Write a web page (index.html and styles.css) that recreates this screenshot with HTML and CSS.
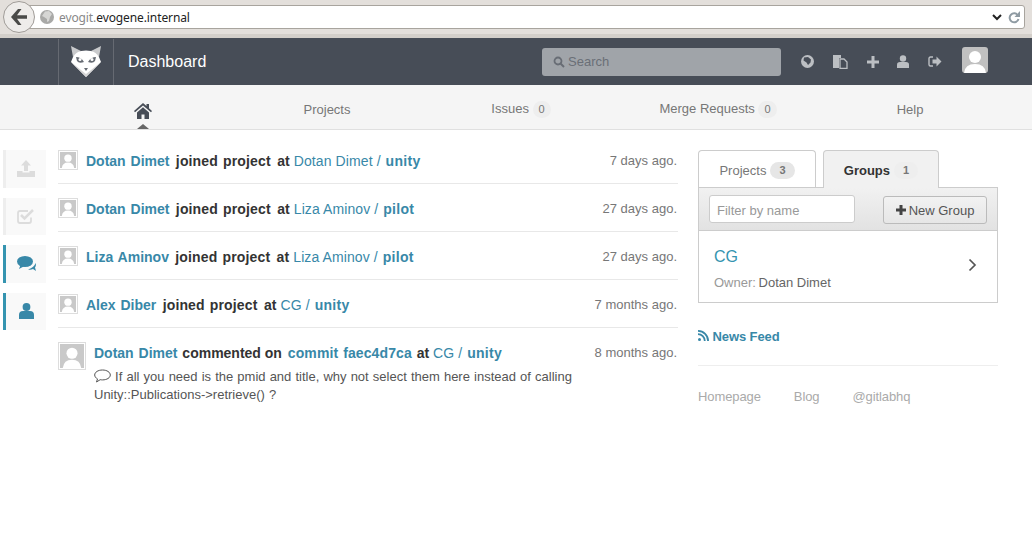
FILE: index.html
```html
<!DOCTYPE html>
<html lang="en">
<head>
    <meta charset="UTF-8">
    <meta name="viewport" content="width=device-width, initial-scale=1.0">
    <title>Dashboard</title>
    <link rel="stylesheet" href="styles.css">
</head>
<body>
    <div class="browser-bar">
        <div class="back-btn">
            <svg width="18" height="16" viewBox="0 0 18 16"><path d="M8 0 1 8l7 8h3.500L7 9.800h10V6.200H7L11.500 0z" fill="#4a4a48"/></svg>
        </div>
        <div class="url-box">
            <svg class="globe" width="14" height="14" viewBox="0 0 14 14"><circle cx="7" cy="7" r="7" fill="#a9a9a7"/><path d="M5 1.500 9 1l3 3-2 3-1 4-2 1V9L4 7 2 6z" fill="#d6d6d4"/></svg>
            <span class="url-sub">evogit.</span><span class="url-main">evogene.internal</span>
            <span class="url-tools">
                <svg width="10" height="7" viewBox="0 0 10 7"><path d="M1 1l4 4 4-4" fill="none" stroke="#222" stroke-width="2"/></svg>
                <svg width="12" height="13" viewBox="0 0 12 13"><path d="M10 4.500A4.500 4.500 0 1 0 10.500 8" fill="none" stroke="#8f9ba3" stroke-width="2"/><path d="M12 0v6H6.500z" fill="#8f9ba3"/></svg>
            </span>
        </div>
    </div>

    <header class="navbar">
        <div class="logo-cell">
            <svg width="32" height="32" viewBox="0 0 32 32">
                <path d="M1 0l2 11 8-6zM31 0l-2 11-8-6z" fill="#c9cacc"/>
                <path d="M3 11Q6 6 11 5q5-1 10 0 5 1 8 6l2 5-15 15L1 16z" fill="#fff"/>
                <path d="M1 16l15 15 15-15-15 12z" fill="#d4d4d4"/>
                <path d="M6 11q5 0 8 5-5 2-7-1z" fill="#666b73"/>
                <path d="M26 11q-5 0-8 5 5 2 7-1z" fill="#666b73"/>
                <circle cx="10" cy="13.500" r="1.500" fill="#fff"/>
                <circle cx="22" cy="13.500" r="1.500" fill="#fff"/>
                <path d="M14 22h4l-2 3z" fill="#666b73"/>
            </svg>
        </div>
        <div class="page-title">Dashboard</div>
        <div class="search-box">
            <svg width="12" height="12" viewBox="0 0 12 12"><circle cx="5" cy="5" r="3.500" fill="none" stroke="#686d75" stroke-width="1.800"/><path d="M7.500 7.500 11 11" stroke="#686d75" stroke-width="2"/></svg>
            <span>Search</span>
        </div>
        <div class="nav-icons">
            <svg width="13" height="13" viewBox="0 0 13 13"><circle cx="6.500" cy="6.500" r="6.500" fill="#bcbfc3"/><path d="M3 2.500 7 2l3 2.500-.5 3L7 10 5.500 7.500 2.500 5.500z" fill="#474d57"/></svg>
            <svg width="15" height="15" viewBox="0 0 15 15"><path d="M0 1h8v3H6v10H0z" fill="#bcbfc3"/><path d="M7 5h4l3 3v6.500H7z" fill="none" stroke="#bcbfc3" stroke-width="1.300"/></svg>
            <svg width="12" height="12" viewBox="0 0 12 12"><path d="M4.500 0h3v4.500H12v3H7.500V12h-3V7.500H0v-3h4.500z" fill="#bcbfc3"/></svg>
            <svg width="12" height="13" viewBox="0 0 12 13"><circle cx="6" cy="3.500" r="3.200" fill="#bcbfc3"/><path d="M0 13V9.500Q0 7 3 7h6q3 0 3 2.500V13z" fill="#bcbfc3"/></svg>
            <svg width="14" height="11" viewBox="0 0 14 11"><path d="M5 1H2.500Q1 1 1 2.500v6Q1 10 2.500 10H5" fill="none" stroke="#bcbfc3" stroke-width="1.400"/><path d="M4.500 3.500h4V.5l5 5-5 5v-3h-4z" fill="#bcbfc3"/></svg>
        </div>
        <div class="nav-avatar">
            <svg viewBox="0 0 26 26"><circle cx="13" cy="10" r="6" fill="#fff"/><path d="M2 26q1-9 11-9t11 9z" fill="#fff"/></svg>
        </div>
    </header>

    <nav class="subnav">
        <a class="subnav-item active">
            <svg width="18" height="16" viewBox="0 0 18 16"><path d="M9 0 0 8l1 1.200L9 2.500l8 6.700L18 8l-3-2.700V1h-2.500v2.100z" fill="#474d57"/><path d="M3 9.500 9 4.300l6 5.200V16h-4.500v-4.500h-3V16H3z" fill="#474d57"/></svg>
        </a>
        <a class="subnav-item">Projects</a>
        <a class="subnav-item">Issues <span class="count">0</span></a>
        <a class="subnav-item">Merge Requests <span class="count">0</span></a>
        <a class="subnav-item">Help</a>
    </nav>

    <div class="content">
        <div class="filters">
            <div class="filter">
                <svg width="18" height="17" viewBox="0 0 18 17"><path d="M9 0l5 5.500h-3V11H7V5.500H4z" fill="#dcdcdc"/><path d="M0 11h5.500v1.500h7V11H18v6H0z" fill="#dcdcdc"/></svg>
            </div>
            <div class="filter">
                <svg width="18" height="17" viewBox="0 0 18 17"><path d="M14 9.500V13q0 2-2 2H3q-2 0-2-2V5q0-2 2-2h8" fill="none" stroke="#dcdcdc" stroke-width="1.800"/><path d="M4 7l3.500 3.500L16 2" fill="none" stroke="#dcdcdc" stroke-width="2.500"/></svg>
            </div>
            <div class="filter on">
                <svg width="19" height="16" viewBox="0 0 19 16"><path d="M11 13.500q3 .5 5-.5l3 2-1-3.500q1.500-2 .5-4.500-1 4-7.500 6.500z" fill="#3888a8"/><ellipse cx="8" cy="5.500" rx="8" ry="5.500" fill="#3888a8"/><path d="M3.500 9 2 13l5.500-3z" fill="#3888a8"/></svg>
            </div>
            <div class="filter on">
                <svg width="15" height="16" viewBox="0 0 15 16"><circle cx="7.500" cy="4" r="3.900" fill="#3888a8"/><path d="M0 16v-4q0-4 4-4h7q4 0 4 4v4z" fill="#3888a8"/></svg>
            </div>
        </div>

        <main class="events">
            <div class="event">
                <div class="avatar"><svg viewBox="0 0 26 26"><rect width="26" height="26" fill="#c9c9c9"/><circle cx="13" cy="10" r="6" fill="#fff"/><path d="M3 26q1-9 10-9t10 9z" fill="#fff"/></svg></div>
                <div class="event-title"><a>Dotan Dimet</a> <b class="act">joined project</b> <b class="act">at</b> <a class="thin">Dotan Dimet /</a> <a class="repo">unity</a></div>
                <time>7 days ago.</time>
            </div>
            <div class="event">
                <div class="avatar"><svg viewBox="0 0 26 26"><rect width="26" height="26" fill="#c9c9c9"/><circle cx="13" cy="10" r="6" fill="#fff"/><path d="M3 26q1-9 10-9t10 9z" fill="#fff"/></svg></div>
                <div class="event-title"><a>Dotan Dimet</a> <b class="act">joined project</b> <b class="act">at</b> <a class="thin">Liza Aminov /</a> <a class="repo">pilot</a></div>
                <time>27 days ago.</time>
            </div>
            <div class="event">
                <div class="avatar"><svg viewBox="0 0 26 26"><rect width="26" height="26" fill="#c9c9c9"/><circle cx="13" cy="10" r="6" fill="#fff"/><path d="M3 26q1-9 10-9t10 9z" fill="#fff"/></svg></div>
                <div class="event-title"><a>Liza Aminov</a> <b class="act">joined project</b> <b class="act">at</b> <a class="thin">Liza Aminov /</a> <a class="repo">pilot</a></div>
                <time>27 days ago.</time>
            </div>
            <div class="event">
                <div class="avatar"><svg viewBox="0 0 26 26"><rect width="26" height="26" fill="#c9c9c9"/><circle cx="13" cy="10" r="6" fill="#fff"/><path d="M3 26q1-9 10-9t10 9z" fill="#fff"/></svg></div>
                <div class="event-title"><a>Alex Diber</a> <b class="act">joined project</b> <b class="act">at</b> <a class="thin">CG /</a> <a class="repo">unity</a></div>
                <time>7 months ago.</time>
            </div>
            <div class="event comment">
                <div class="avatar big"><svg viewBox="0 0 26 26"><rect width="26" height="26" fill="#c9c9c9"/><circle cx="13" cy="10" r="6" fill="#fff"/><path d="M3 26q1-9 10-9t10 9z" fill="#fff"/></svg></div>
                <div class="comment-body">
                    <div class="comment-head">
                        <div class="event-title"><a>Dotan Dimet</a> <b>commented on</b> <a class="commit">commit faec4d7ca</a> <b>at</b> <a class="thin">CG /</a> <a class="repo">unity</a></div>
                        <time>8 months ago.</time>
                    </div>
                    <p class="note">
                        <svg width="17" height="14" viewBox="0 0 17 14"><path d="M8.500 1C4 1 .7 3.200.7 6c0 1.600 1.100 3 2.800 3.900L2.500 13l3.700-2.300q1.100.2 2.300.2c4.500 0 7.800-2.200 7.800-4.900S13 1 8.500 1z" fill="none" stroke="#555" stroke-width="1"/></svg>
                        If all you need is the pmid and title, why not select them here instead of calling Unity::Publications-&gt;retrieve() ?
                    </p>
                </div>
            </div>
        </main>

        <aside class="sidebar">
            <div class="tabs">
                <div class="tab">Projects <span class="count dark">3</span></div>
                <div class="tab current">Groups <span class="count">1</span></div>
            </div>
            <div class="panel-head">
                <div class="filter-input">Filter by name</div>
                <div class="new-btn">
                    <svg width="10" height="10" viewBox="0 0 10 10"><path d="M3.500 0h3v3.500H10v3H6.500V10h-3V6.500H0v-3h3.500z" fill="#444"/></svg>
                    New Group
                </div>
            </div>
            <div class="group-row">
                <div class="group-text">
                    <div class="group-name">CG</div>
                    <div class="group-owner"><span>Owner:</span> Dotan Dimet</div>
                </div>
                <svg class="group-arrow" width="9" height="14" viewBox="0 0 9 14"><path d="M1.500 1.500 7 7l-5.500 5.500" fill="none" stroke="#555" stroke-width="1.700"/></svg>
            </div>
            <a class="feed-link">
                <svg width="11" height="11" viewBox="0 0 11 11"><circle cx="1.500" cy="9.500" r="1.500" fill="#3888a8"/><path d="M0 4.200A6.800 6.800 0 0 1 6.800 11M0 .9A10.100 10.100 0 0 1 10.100 11" fill="none" stroke="#3888a8" stroke-width="1.800"/></svg>
                News Feed
            </a>
            <div class="side-links">
                <a>Homepage</a>
                <a>Blog</a>
                <a>@gitlabhq</a>
            </div>
        </aside>
    </div>
</body>
</html>
```

FILE: styles.css
```css
*{
    box-sizing: border-box;
    margin: 0;
    padding: 0;
}
html, body{
    height: 100%;
}
body{
    font-family: "Liberation Sans", Arial, sans-serif;
    font-size: 13px;
    color: #555;
    background-color: #fff;
    overflow: hidden;
}

/* browser chrome */
.browser-bar{
    height: 38px;
    background-color: #e3dfdb;
    border-bottom: 4px solid #d3cfca;
    position: relative;
    padding: 5px 7px 0 28px;
}
.url-box{
    height: 24px;
    background-color: #fff;
    border: 1px solid #a8a49e;
    border-radius: 0 3px 3px 0;
    display: flex;
    align-items: center;
    padding-left: 11px;
    font-family: "Noto Sans", sans-serif;
    font-size: 12px;
    letter-spacing: -.1px;
}
.globe{
    margin-right: 5px;
}
.url-sub{
    color: #888;
}
.url-main{
    color: #222;
}
.url-tools{
    margin-left: auto;
    display: flex;
    align-items: center;
    gap: 6px;
    padding-right: 4px;
}
.back-btn{
    position: absolute;
    left: 3px;
    top: 1px;
    width: 32px;
    height: 32px;
    border-radius: 50%;
    background-color: #eeecea;
    border: 1px solid #a09c98;
    display: flex;
    align-items: center;
    justify-content: center;
    z-index: 2;
}

/* top bar */
.navbar{
    height: 47px;
    background-color: #474d57;
    display: flex;
    align-items: center;
    padding-left: 58px;
}
.logo-cell{
    width: 56px;
    height: 46px;
    border-left: 1px solid #666a72;
    border-right: 1px solid #666a72;
    display: flex;
    align-items: center;
    justify-content: center;
}
.page-title{
    color: #fff;
    font-size: 16px;
    margin-left: 14px;
    width: 414px;
}
.search-box{
    width: 239px;
    height: 28px;
    background-color: #a0a4a9;
    border-radius: 3px;
    display: flex;
    align-items: center;
    gap: 3px;
    padding-left: 11px;
    color: #6a6f77;
    font-size: 13px;
}
.nav-icons{
    display: flex;
    align-items: center;
    justify-content: space-between;
    width: 141px;
    margin-left: 20px;
}
.nav-avatar{
    width: 26px;
    height: 26px;
    background-color: #c0c0c0;
    border-radius: 3px;
    overflow: hidden;
    margin-left: 20px;
    align-self: flex-start;
    margin-top: 9px;
}
.nav-avatar svg{
    display: block;
}

/* second nav */
.subnav{
    height: 45px;
    background-color: #f5f5f5;
    border-bottom: 1px solid #e0e0e0;
    display: grid;
    grid-template-columns: 142px 226px 162px 232px 152px;
    padding-left: 72px;
    padding-top: 5px;
    align-items: center;
    justify-items: center;
}
.subnav-item{
    color: #777;
    font-size: 13px;
}
.subnav-item.active{
    height: 44px;
    margin-top: -5px;
    position: relative;
    padding-top: 18px;
}
.subnav-item.active::after{
    content: "";
    position: absolute;
    left: 50%;
    bottom: 0;
    margin-left: -6px;
    border-left: 6px solid transparent;
    border-right: 6px solid transparent;
    border-bottom: 5px solid #666;
}
.count{
    display: inline-block;
    background-color: #eee;
    color: #777;
    font-size: 11px;
    border-radius: 9px;
    padding: 2px 6px;
    line-height: 13px;
}

/* page body */
.content{
    display: flex;
    padding: 20px 0 0 3px;
}
.filters{
    width: 43px;
    margin-right: 12px;
    display: flex;
    flex-direction: column;
}
.filter{
    height: 37.5px;
    margin-bottom: 10px;
    background-color: #f9f9f9;
    border-left: 3px solid #eee;
    display: flex;
    align-items: center;
    justify-content: center;
}
.filter.on{
    border-left-color: #3594b0;
}
.events{
    width: 620px;
}
.event{
    height: 34px;
    margin-bottom: 14px;
    border-bottom: 1px solid #e8e8e8;
    display: flex;
    align-items: flex-start;
    gap: 8px;
}
.event.comment{
    border-bottom: 0;
    height: auto;
}
.avatar{
    width: 20px;
    height: 20px;
    flex-shrink: 0;
    padding: 1px;
    background-color: #fff;
    border: 1px solid #ddd;
}
.avatar svg{
    display: block;
    width: 100%;
    height: 100%;
}
.avatar.big{
    width: 28px;
    height: 28px;
}
.event-title{
    font-size: 14px;
    line-height: 20px;
    padding-top: 1px;
    color: #333;
    font-weight: bold;
    word-spacing: 1px;
}
.event-title a{
    color: #3888a8;
}
.event-title a.thin{
    font-weight: normal;
    letter-spacing: .1px;
    word-spacing: 0;
    margin-left: -1px;
}
.event-title a.repo{
    letter-spacing: .3px;
}
.act{
    letter-spacing: .15px;
    margin-left: 1.5px;
}
.comment-head b{
    word-spacing: 0;
}
.commit{
    letter-spacing: .1px;
    margin-left: 1px;
}
time{
    margin-left: auto;
    padding: 1px 1px 0 0;
    color: #777;
    font-size: 13px;
    line-height: 20px;
}
.comment-body{
    flex: 1;
}
.comment-head{
    display: flex;
}
.note{
    margin-top: 5px;
    line-height: 18px;
    font-size: 13px;
    word-spacing: .5px;
    color: #555;
    width: 490px;
}
.note svg{
    vertical-align: -2px;
}

/* right column */
.sidebar{
    width: 300px;
    margin-left: 20px;
}
.tabs{
    display: flex;
    gap: 7px;
    height: 37px;
}
.tab{
    width: 118px;
    height: 37px;
    padding-top: 2px;
    border: 1px solid #ccc;
    border-bottom: 0;
    border-radius: 4px 4px 0 0;
    color: #777;
    display: flex;
    align-items: center;
    justify-content: center;
    gap: 4px;
}
.tab .count{
    padding: 2px 9px;
}
.tab.current{
    width: 116px;
    height: 38px;
    position: relative;
    z-index: 1;
    background-color: #f1f1f1;
    color: #333;
    font-weight: bold;
}
.count.dark{
    background-color: #e6e6e6;
    font-weight: bold;
}
.panel-head{
    height: 44px;
    border: 1px solid #ccc;
    background-image: linear-gradient(#f1f1f1, #e2e2e2);
    display: flex;
    align-items: center;
    justify-content: space-between;
    padding: 0 10px;
}
.filter-input{
    width: 146px;
    height: 28px;
    margin-top: -1px;
    background-color: #fff;
    border: 1px solid #ccc;
    border-radius: 3px;
    color: #999;
    padding: 7px 7px 0;
}
.new-btn{
    width: 104px;
    height: 28px;
    margin-top: 2px;
    border: 1px solid #bbb;
    border-radius: 3px;
    background-image: linear-gradient(#f2f2f2, #e6e6e6);
    color: #555;
    display: flex;
    align-items: center;
    justify-content: center;
    gap: 3px;
}
.group-row{
    height: 72px;
    border: 1px solid #ccc;
    border-top: 0;
    display: flex;
    align-items: center;
    justify-content: space-between;
    padding: 0 20px 0 15px;
}
.group-text{
    margin-top: 4px;
}
.group-arrow{
    margin-top: -4px;
}
.group-name{
    color: #3594b0;
    font-size: 16px;
    margin-bottom: 9px;
}
.group-owner{
    color: #666;
}
.group-owner span{
    color: #999;
    margin-right: -1px;
}
.feed-link{
    display: block;
    margin-top: 26px;
    padding-bottom: 21px;
    color: #3888a8;
    font-weight: bold;
    letter-spacing: -.1px;
    border-bottom: 1px solid #eee;
}
.side-links{
    display: flex;
    gap: 33px;
    margin-top: 23px;
    color: #aaa;
    letter-spacing: -.1px;
}
```
